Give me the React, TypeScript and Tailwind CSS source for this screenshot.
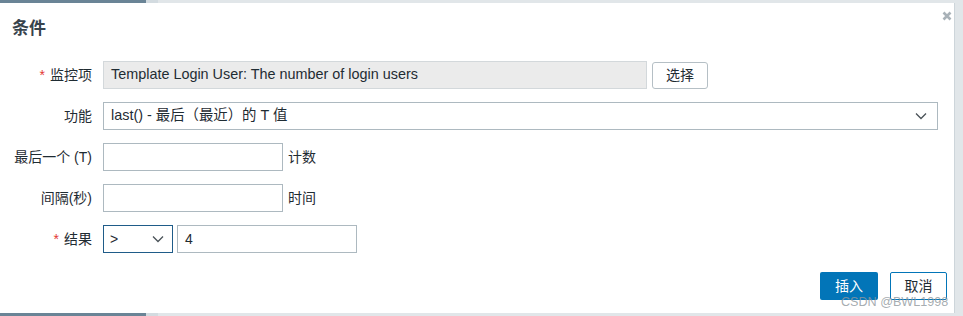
import React from "react";

const font = { fontFamily: '"Liberation Sans", "Noto Sans CJK SC", sans-serif' };

const Chevron = ({ className }: { className?: string }) => (
  <svg className={className} width="12" height="8" viewBox="0 0 12 8" fill="none">
    <path d="M1 1.5 L6 6.5 L11 1.5" stroke="#4a5258" strokeWidth="1.3" />
  </svg>
);

const Row = ({ label, required, children }: { label: string; required?: boolean; children: React.ReactNode }) => (
  <div className="flex items-center h-[28px] gap-[11px]">
    <div className="w-[92px] text-right text-[14px] text-[#1f2c33] whitespace-nowrap">
      {required && <span className="text-[#e33734] mr-[5px]">*</span>}
      {label}
    </div>
    {children}
  </div>
);

const App = () => {
  return (
    <div style={font} className="w-[963px] h-[316px] bg-[#e1e6e9] flex flex-col overflow-hidden">
      <div className="h-[3px] flex shrink-0">
        <div className="w-[146px] bg-[#6a8496]" />
        <div className="w-[12px] bg-[#d3dbe0]" />
      </div>

      <div className="relative w-[955px] h-[310px] bg-white border-r border-[#cdd5da] shrink-0">
        <div className="pt-[14px] px-[12px] text-[17px] leading-[24px] font-bold text-[#37434c]">条件</div>
        {/* close */}
        <svg className="absolute left-[942px] top-[8px]" width="10" height="10" viewBox="0 0 10 10">
          <path d="M1.5 1.5 L8.5 8.5 M8.5 1.5 L1.5 8.5" stroke="#a9b2b8" strokeWidth="2.6" />
        </svg>

        <div className="mt-[20px] flex flex-col gap-[13px]">
          <Row label="监控项" required>
            <div className="w-[544px] h-[28px] bg-[#ebebeb] border border-[#d3d8db] px-[7px] flex items-center text-[14.4px] text-[#1f2c33]">
              Template Login User: The number of login users
            </div>
            <button className="-ml-[6px] w-[56px] h-[27px] border border-[#b5bfc5] rounded-[3px] bg-white text-[14px] text-[#1f2c33]">
              选择
            </button>
          </Row>

          <Row label="功能">
            <div className="w-[835px] h-[28px] border border-[#adb9c0] px-[7px] flex items-center justify-between text-[14.4px] text-[#1f2c33]">
              <span>last() - 最后（最近）的 T 值</span>
              <Chevron className="mr-[3px]" />
            </div>
          </Row>

          <Row label="最后一个 (T)">
            <div className="w-[180px] h-[28px] border border-[#adb9c0]" />
            <span className="-ml-[6px] text-[14px] text-[#1f2c33]">计数</span>
          </Row>

          <Row label="间隔(秒)">
            <div className="w-[180px] h-[28px] border border-[#adb9c0]" />
            <span className="-ml-[6px] text-[14px] text-[#1f2c33]">时间</span>
          </Row>

          <Row label="结果" required>
            <div className="w-[70px] h-[28px] border border-[#1f5c89] px-[6px] flex items-center justify-between text-[14px] text-[#1f2c33]">
              <span>&gt;</span>
              <Chevron className="mr-[2px]" />
            </div>
            <div className="-ml-[7px] w-[180px] h-[28px] border border-[#adb9c0] px-[7px] flex items-center text-[14px] text-[#1f2c33]">
              4
            </div>
          </Row>
        </div>

        <div className="mt-[19px] pr-[7px] flex justify-end gap-[12px]">
          <button className="w-[58px] h-[28px] rounded-[2px] bg-[#0275b8] text-white text-[14px]">插入</button>
          <button className="w-[57px] h-[28px] rounded-[2px] border border-[#0275b8] bg-white text-[#1f2c33] text-[14px]">取消</button>
        </div>

        <span className="absolute left-[841px] top-[290px] text-[12.6px] text-[#8f979c]/80 whitespace-nowrap">CSDN @BWL1998</span>
      </div>

      <div className="h-[3px] flex shrink-0">
        <div className="w-[146px] bg-[#6a8496]" />
        <div className="w-[12px] bg-[#d3dbe0]" />
      </div>
    </div>
  );
};

export default App;
